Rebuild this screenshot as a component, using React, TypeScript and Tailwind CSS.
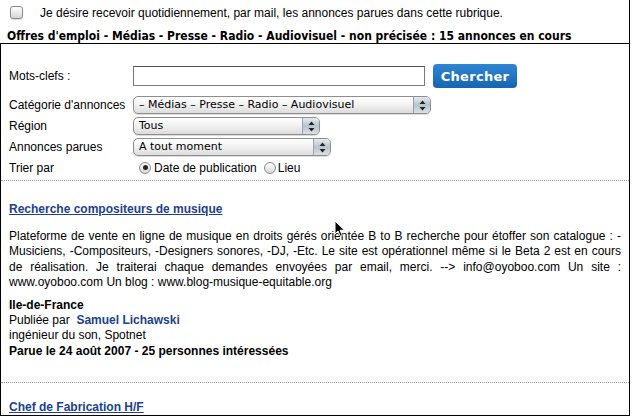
import React from 'react';

const AquaArrows: React.FC = () => (
  <svg width="7" height="11" viewBox="0 0 7 11" className="block">
    <path d="M3.5 0.5 L6.5 4 L0.5 4 Z" fill="#222" />
    <path d="M3.5 10.5 L6.5 7 L0.5 7 Z" fill="#222" />
  </svg>
);

const AquaSelect: React.FC<{ value: string; width: string }> = ({ value, width }) => (
  <div
    className={`${width} h-[18px] flex items-stretch rounded-[5px] border border-[#8e8e8e] overflow-hidden bg-gradient-to-b from-[#ffffff] via-[#f1f1f1] to-[#dcdcdc] shadow-[0_1px_1px_rgba(0,0,0,0.15)]`}
  >
    <div className="flex-1 pl-[5px] text-[11px] leading-[16px] text-black font-['DejaVu_Sans'] whitespace-nowrap overflow-hidden">
      {value}
    </div>
    <div className="w-[17px] flex items-center justify-center border-l border-[#9aa3ad] bg-gradient-to-b from-[#e6ebf0] via-[#b9c3cd] to-[#d9e0e7]">
      <AquaArrows />
    </div>
  </div>
);

const Radio: React.FC<{ checked?: boolean }> = ({ checked }) => (
  <span className="w-[12px] h-[12px] rounded-full border border-[#8a8a8a] bg-gradient-to-b from-[#ffffff] to-[#d8d8d8] flex items-center justify-center shrink-0">
    {checked && <span className="w-[5px] h-[5px] rounded-full bg-[#222]" />}
  </span>
);

const Cursor: React.FC = () => (
  <svg width="12" height="18" viewBox="0 0 12 18" className="absolute left-[334px] top-[220px]">
    <path d="M1 1 L1 14 L4 11 L6.5 16.5 L8.5 15.5 L6 10.2 L10.5 10.2 Z" fill="#000" stroke="#fff" strokeWidth="1" />
  </svg>
);

export default function App() {
  return (
    <div className="w-[632px] h-[417px] bg-white relative overflow-hidden font-['Liberation_Sans'] text-black">
      <div className="mr-[2px] h-[416px] border-r border-black flex flex-col">
        {/* subscription line */}
        <div className="h-[30px] flex items-center pl-[10px] pt-[2px]">
          <span className="w-[13px] h-[13px] rounded-[3px] border border-[#8a8a8a] bg-gradient-to-b from-[#ffffff] to-[#d6d6d6] shadow-[0_1px_1px_rgba(0,0,0,0.15)]" />
          <span className="ml-[17px] text-[12px]">Je désire recevoir quotidiennement, par mail, les annonces parues dans cette rubrique.</span>
        </div>
        <h1 className="mt-[4px] h-[17px] pl-[7px] text-[12px] leading-[16px] font-bold font-['DejaVu_Sans_Condensed'] whitespace-nowrap">
          Offres d'emploi - Médias - Presse - Radio - Audiovisuel - non précisée : 15 annonces en cours
        </h1>

        <div className="mt-[-1px] flex-1 border-t border-l border-b border-black flex flex-col">
          {/* search form */}
          <div className="pt-[20px] pl-[8px] grid grid-cols-[124px_1fr] text-[12px] items-center">
            <span className="h-[25px] leading-[25px]">Mots-clefs :</span>
            <div className="flex items-center h-[25px]">
              <div className="w-[292px] h-[20px] border border-[#7a7a7a] border-t-[#555] bg-white" />
              <button className="ml-[8px] w-[84px] h-[24px] rounded-[4px] bg-gradient-to-b from-[#2f86d2] to-[#1565b3] text-white font-bold text-[13px] font-['DejaVu_Sans'] tracking-[0.3px]">
                Chercher
              </button>
            </div>

            <span className="h-[21px] leading-[21px] mt-[6px]">Catégorie d'annonces</span>
            <div className="h-[21px] mt-[6px] flex items-center">
              <AquaSelect width="w-[298px]" value="– Médias – Presse – Radio – Audiovisuel" />
            </div>

            <span className="h-[21px] leading-[21px]">Région</span>
            <div className="h-[21px] flex items-center">
              <AquaSelect width="w-[187px]" value="Tous" />
            </div>

            <span className="h-[21px] leading-[21px]">Annonces parues</span>
            <div className="h-[21px] flex items-center">
              <AquaSelect width="w-[198px]" value="A tout moment" />
            </div>

            <span className="h-[20px] leading-[20px]">Trier par</span>
            <div className="h-[20px] flex items-center pl-[6px]">
              <Radio checked />
              <span className="ml-[3px]">Date de publication</span>
              <span className="ml-[7px]"><Radio /></span>
              <span className="ml-[2px]">Lieu</span>
            </div>
          </div>

          <div className="mt-[2px] border-t border-dotted border-[#9a9a9a]" />

          {/* first ad */}
          <div className="pl-[8px] pr-[8px] text-[12px]">
            <a className="block mt-[21px] font-bold text-[#213f8f] underline leading-[15px]">Recherche compositeurs de musique</a>
            <p className="mt-[12px] text-justify leading-[15.5px] [text-align-last:left]">
              Plateforme de vente en ligne de musique en droits gérés orientée B to B recherche pour étoffer son catalogue : -Musiciens, -Compositeurs, -Designers sonores, -DJ, -Etc. Le site est opérationnel même si le Beta 2 est en cours de réalisation. Je traiterai chaque demandes envoyées par email, merci. --&gt; info@oyoboo.com Un site : www.oyoboo.com Un blog : www.blog-musique-equitable.org
            </p>
            <div className="mt-[7px] leading-[15.3px]">
              <div className="font-bold">Ile-de-France</div>
              <div>
                Publiée par&nbsp; <span className="font-bold text-[#213f8f]">Samuel Lichawski</span>
              </div>
              <div>ingénieur du son, Spotnet</div>
              <div className="font-bold">Parue le 24 août 2007 - 25 personnes intéressées</div>
            </div>
          </div>

          <div className="mt-[23px] border-t border-dotted border-[#9a9a9a]" />

          <div className="pl-[8px] text-[12px]">
            <a className="block mt-[17px] font-bold text-[#213f8f] underline leading-[15px]">Chef de Fabrication H/F</a>
          </div>
        </div>
      </div>
      <Cursor />
    </div>
  );
}
